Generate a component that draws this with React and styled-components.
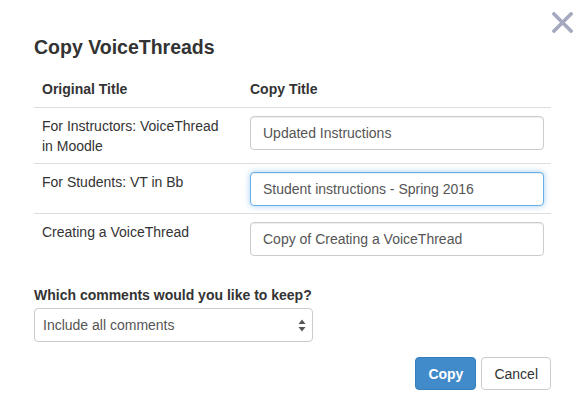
import React from 'react'
import styled, { createGlobalStyle } from 'styled-components'

const GlobalStyle = createGlobalStyle`
  * {
    box-sizing: border-box;
  }
  body {
    margin: 0;
    background: #fff;
    color: #333;
    font-family: 'Liberation Sans', Helvetica, Arial, sans-serif;
    font-size: 14px;
    line-height: 20px;
  }
`

const rows = [
  { original: 'For Instructors: VoiceThread in Moodle', copy: 'Updated Instructions' },
  { original: 'For Students: VT in Bb', copy: 'Student instructions - Spring 2016', focused: true },
  { original: 'Creating a VoiceThread', copy: 'Copy of Creating a VoiceThread' },
]

const App = () => (
  <>
    <GlobalStyle />
    <Modal>
      <Close aria-label="Close">
        <svg width="21" height="21" viewBox="0 0 21 21">
          <path d="M2 2 L19 19 M19 2 L2 19" stroke="#a5a9bf" strokeWidth="3.6" strokeLinecap="square" />
        </svg>
      </Close>
      <Title>Copy VoiceThreads</Title>
      <Table>
        <colgroup>
          <col style={{ width: 208 }} />
          <col />
        </colgroup>
        <thead>
          <tr>
            <Th>Original Title</Th>
            <Th>Copy Title</Th>
          </tr>
        </thead>
        <tbody>
          {rows.map(r => (
            <tr key={r.original}>
              <Td $first>{r.original}</Td>
              <Td>
                <Input defaultValue={r.copy} $focused={r.focused} />
              </Td>
            </tr>
          ))}
        </tbody>
      </Table>
      <Label htmlFor="keep">Which comments would you like to keep?</Label>
      <SelectWrap>
        <Select id="keep" defaultValue="all">
          <option value="all">Include all comments</option>
          <option value="none">Do not include comments</option>
        </Select>
        <Arrows width="8" height="13" viewBox="0 0 8 13">
          <path d="M4 0.5 L7.5 5 L0.5 5 Z M0.5 8 L7.5 8 L4 12.5 Z" fill="#555" />
        </Arrows>
      </SelectWrap>
      <Footer>
        <Button $primary>Copy</Button>
        <Button>Cancel</Button>
      </Footer>
    </Modal>
  </>
)

const Modal = styled.div`
  position: relative;
  width: 587px;
  height: 415px;
  padding: 32px 36px 0 34px;
`

const Close = styled.button`
  position: absolute;
  top: 12px;
  right: 14px;
  padding: 0;
  border: 0;
  background: none;
  cursor: pointer;
  line-height: 0;
`

const Title = styled.h4`
  margin: 0 0 9px;
  font-size: 19.5px;
  font-weight: bold;
  line-height: 30px;
  color: #333;
`

const Table = styled.table`
  width: 100%;
  border-collapse: collapse;
  table-layout: fixed;
  margin-bottom: 22px;
`

const Th = styled.th`
  padding: 8px;
  text-align: left;
  font-weight: bold;
  border-bottom: 1px solid #ddd;
`

const Td = styled.td`
  padding: ${p => (p.$first ? '8px 18px 7px 8px' : '8px 7px 7px 8px')};
  vertical-align: top;
  border-top: 1px solid #ddd;
  tr:first-child > & {
    border-top: 0;
  }
`

const Input = styled.input`
  display: block;
  width: 100%;
  height: 34px;
  padding: 6px 12px;
  font-family: inherit;
  font-size: 14px;
  color: #555;
  background: #fff;
  border: 1px solid ${p => (p.$focused ? '#66afe9' : '#ccc')};
  border-radius: 4px;
  outline: 0;
  box-shadow: ${p =>
    p.$focused
      ? 'inset 0 1px 1px rgba(0,0,0,.075), 0 0 6px rgba(102,175,233,.6)'
      : 'inset 0 1px 1px rgba(0,0,0,.075)'};
`

const Label = styled.label`
  display: block;
  font-weight: bold;
  margin-bottom: 3px;
`

const SelectWrap = styled.div`
  position: relative;
  width: 279px;
`

const Select = styled.select`
  display: block;
  width: 100%;
  height: 34px;
  padding: 0 24px 0 8px;
  font-family: inherit;
  font-size: 14px;
  color: #555;
  background: #fff;
  border: 1px solid #ccc;
  border-radius: 4px;
  appearance: none;
  outline: 0;
`

const Arrows = styled.svg`
  position: absolute;
  right: 7px;
  top: 11px;
  pointer-events: none;
`

const Footer = styled.div`
  display: flex;
  justify-content: flex-end;
  gap: 5px;
  margin-top: 15px;
`

const Button = styled.button`
  height: 33px;
  padding: 0 12px;
  font-family: inherit;
  font-size: 14px;
  font-weight: ${p => (p.$primary ? 'bold' : 'normal')};
  color: ${p => (p.$primary ? '#fff' : '#333')};
  background: ${p => (p.$primary ? '#428bca' : '#fff')};
  border: 1px solid ${p => (p.$primary ? '#357ebd' : '#ccc')};
  border-radius: 4px;
  cursor: pointer;
`

export default App
